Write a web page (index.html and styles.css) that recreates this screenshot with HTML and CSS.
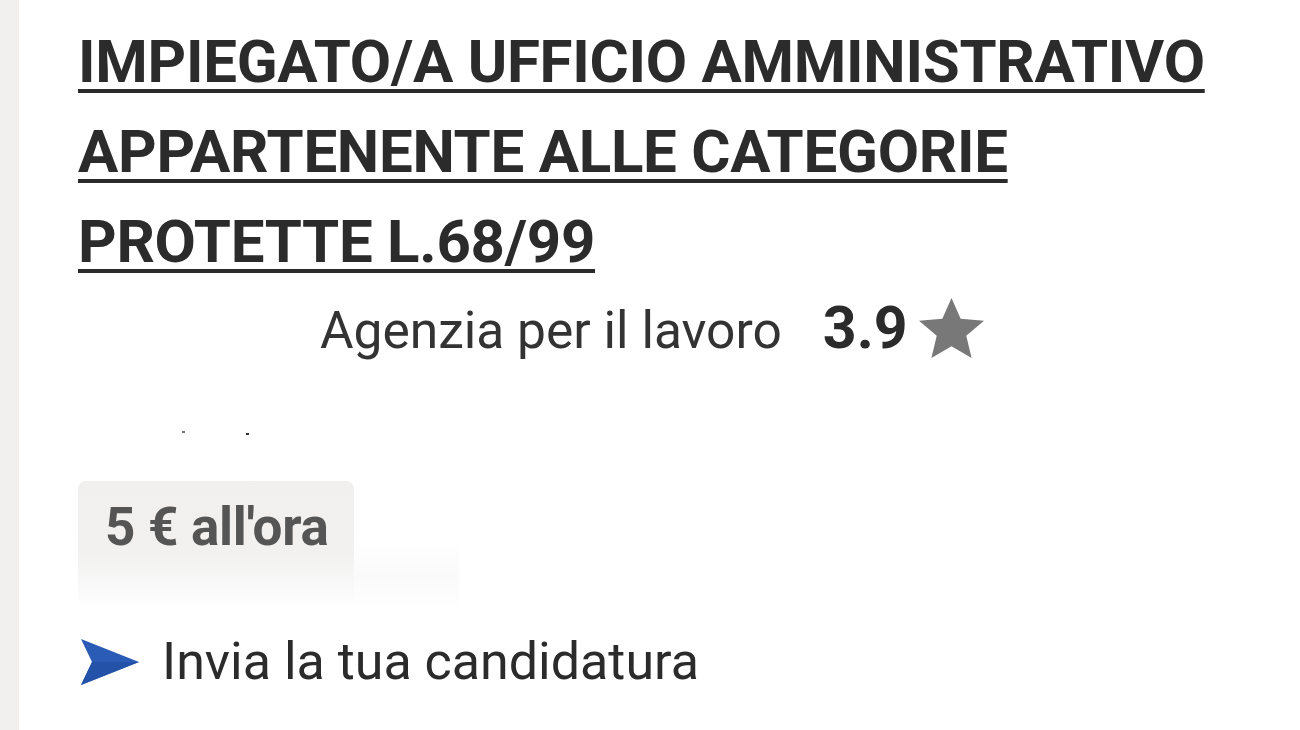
FILE: index.html
```html
<!DOCTYPE html>
<html lang="it">
<head>
<meta charset="utf-8">
<title>Offerta di lavoro</title>
<link rel="stylesheet" href="styles.css">
</head>
<body>
<div class="page">
  <aside class="rail"></aside>
  <main class="card">
    <h1 class="title"><a href="#">IMPIEGATO/A UFFICIO AMMINISTRATIVO APPARTENENTE ALLE CATEGORIE PROTETTE L.68/99</a></h1>
    <div class="company">
      <span class="company-name">Agenzia per il lavoro</span>
      <span class="rating">3.9</span>
      <svg class="star" viewBox="1 1 22 21" width="65" height="60" preserveAspectRatio="none"><path d="M12 1l3.1 7.3 7.9.7-6 5.2 1.8 7.8L12 17.9l-6.8 4.1 1.8-7.8-6-5.2 7.9-.7z" fill="#787878"/></svg>
    </div>
    <div class="location"><span class="dot"></span><span class="dot dot2"></span></div>
    <div class="salary-wrap">
      <div class="salary">5 € all'ora</div>
      <div class="salary-fade"></div>
    </div>
    <div class="apply">
      <svg class="arrow" viewBox="0 0 58 46" width="58" height="46"><path d="M0 0 L58 23 L0 46 L11 23 Z" fill="#2a5bb5"/><path d="M11 23 L58 23 L0 46 Z" fill="#2452a8"/></svg>
      <span>Invia la tua candidatura</span>
    </div>
  </main>
</div>
</body>
</html>
```
FILE: styles.css
```css
html, body {
  margin: 0;
  padding: 0;
  background: #ffffff;
}
body {
  font-family: Roboto, "Liberation Sans", sans-serif;
  color: #2b2b2b;
}
.page {
  display: flex;
  min-height: 730px;
}
.rail {
  width: 19px;
  flex: none;
  background: #f1f0ee;
}
.card {
  flex: 1;
  padding: 17px 0 0 59px;
}
.title {
  margin: 0;
  font-size: 60px;
  font-weight: 700;
  line-height: 90px;
  letter-spacing: -0.27px;
}
.title a {
  color: #2b2b2b;
  text-decoration: underline;
  text-decoration-thickness: 4px;
  text-underline-offset: 7px;
}
.company {
  display: flex;
  align-items: baseline;
  margin: 6px 0 0 242px;
}
.company-name {
  font-size: 51.5px;
  color: #333;
}
.rating {
  font-size: 59px;
  font-weight: 700;
  color: #2b2b2b;
  margin-left: 41px;
}
.star {
  align-self: flex-start;
  margin: 5px 0 0 11px;
}
.location {
  position: relative;
  height: 119px;
}
.dot {
  position: absolute;
  left: 104px;
  top: 69px;
  width: 3px;
  height: 2px;
  background: #777;
}
.dot2 {
  left: 168px;
  top: 71px;
  background: #333;
}
.salary-wrap {
  display: flex;
}
.salary {
  background: linear-gradient(#f1f0ee 0%, #f2f1f0 55%, #f8f8f8 80%, #ffffff 100%);
  border-radius: 8px;
  color: #555;
  font-size: 53px;
  font-weight: 700;
  padding: 15px 25px 52px 27px;
  letter-spacing: -0.3px;
}
.salary-fade {
  width: 105px;
  margin-top: 62px;
  height: 66px;
  background: linear-gradient(#ffffff, #fafafa 50%, #ffffff);
}
.apply {
  display: flex;
  align-items: center;
  margin-top: 21px;
  font-size: 52px;
  color: #2b2b2b;
}
.arrow {
  margin: 0 23px 0 3px;
}
```
